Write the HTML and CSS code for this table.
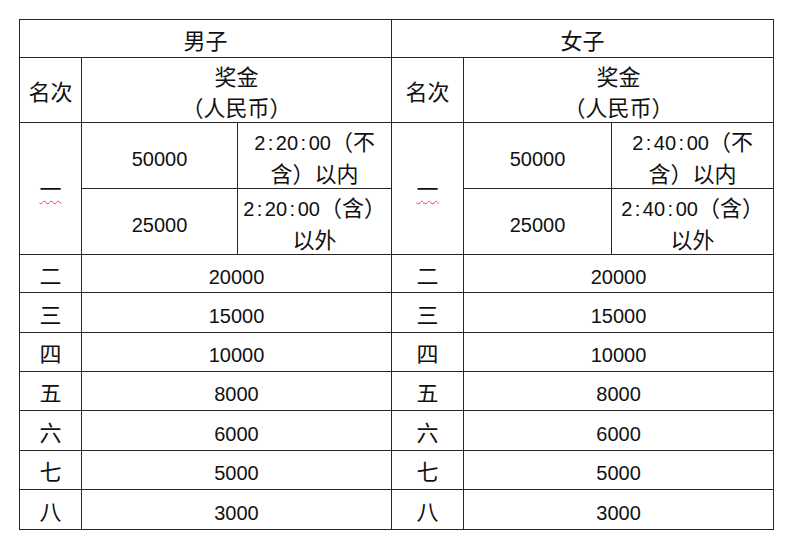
FILE: index.html
```html
<!DOCTYPE html>
<html lang="zh">
<head>
<meta charset="utf-8">
<link rel="stylesheet" href="styles.css">
</head>
<body>
<table class="prize">
  <colgroup>
    <col class="c-rank-m"><col class="c-a-m"><col class="c-b-m">
    <col class="c-rank-f"><col class="c-a-f"><col class="c-b-f">
  </colgroup>
  <tr class="r-head">
    <td colspan="3">男子</td>
    <td colspan="3">女子</td>
  </tr>
  <tr class="r-sub">
    <td>名次</td>
    <td colspan="2" class="two"><div class="lines sub">奖金<br>（人民币）</div></td>
    <td>名次</td>
    <td colspan="2" class="two"><div class="lines sub">奖金<br>（人民币）</div></td>
  </tr>
  <tr class="r-first">
    <td rowspan="2" class="first"><span class="squiggle">一</span></td>
    <td class="num">50000</td>
    <td class="two"><div class="lines"><span class="num">2<span class="colon">:</span>20<span class="colon">:</span>00</span>（不<br>含）以内</div></td>
    <td rowspan="2" class="first"><span class="squiggle">一</span></td>
    <td class="num">50000</td>
    <td class="two"><div class="lines"><span class="num">2<span class="colon">:</span>40<span class="colon">:</span>00</span>（不<br>含）以内</div></td>
  </tr>
  <tr class="r-first">
    <td class="num">25000</td>
    <td class="two"><div class="lines"><span class="num">2<span class="colon">:</span>20<span class="colon">:</span>00</span>（含）<br>以外</div></td>
    <td class="num">25000</td>
    <td class="two"><div class="lines"><span class="num">2<span class="colon">:</span>40<span class="colon">:</span>00</span>（含）<br>以外</div></td>
  </tr>
  <tr class="r-38"><td>二</td><td colspan="2" class="num">20000</td><td>二</td><td colspan="2" class="num">20000</td></tr>
  <tr class="r-40"><td>三</td><td colspan="2" class="num">15000</td><td>三</td><td colspan="2" class="num">15000</td></tr>
  <tr class="r-39"><td>四</td><td colspan="2" class="num">10000</td><td>四</td><td colspan="2" class="num">10000</td></tr>
  <tr class="r-39"><td>五</td><td colspan="2" class="num">8000</td><td>五</td><td colspan="2" class="num">8000</td></tr>
  <tr class="r-40"><td>六</td><td colspan="2" class="num">6000</td><td>六</td><td colspan="2" class="num">6000</td></tr>
  <tr class="r-39"><td>七</td><td colspan="2" class="num">5000</td><td>七</td><td colspan="2" class="num">5000</td></tr>
  <tr class="r-40"><td>八</td><td colspan="2" class="num">3000</td><td>八</td><td colspan="2" class="num">3000</td></tr>
</table>
</body>
</html>
```

FILE: styles.css
```css
html, body {
  margin: 0;
  padding: 0;
  background: #ffffff;
}
body {
  padding: 19px 0 0 19px;
  font-family: "Liberation Sans", "Noto Sans CJK SC", sans-serif;
  font-size: 22px;
  color: #111111;
}
.prize {
  border-collapse: collapse;
  table-layout: fixed;
  width: 755px;
}
.prize td {
  border: 1px solid #262626;
  text-align: center;
  vertical-align: middle;
  padding: 6px 0 0 0;
  line-height: 26px;
  white-space: nowrap;
}
.prize td.num { font-size: 20px; padding-top: 6px; }
.num { font-size: 20px; }

.c-rank-m { width: 62px; }
.c-a-m { width: 156px; }
.c-b-m { width: 154px; }
.c-rank-f { width: 72px; }
.c-a-f { width: 148px; }
.c-b-f { width: 162px; }

.r-head { height: 38px; }
.r-sub { height: 65px; }
.r-first { height: 66px; }
.r-38 { height: 38px; }
.r-39 { height: 39px; }
.r-40 { height: 40px; }

.prize td.two { padding: 0; }
.lines {
  line-height: 32px;
  margin: 3px 0 -3px 0;
}
.lines.sub {
  line-height: 31px;
  margin: 3px 0 -3px 0;
}
.prize td.first { padding-top: 3px; }

.colon {
  display: inline-block;
  padding: 0 2.5px;
}
.squiggle {
  text-decoration: underline wavy #e64545;
  text-decoration-thickness: 1px;
  text-underline-offset: 3px;
}
```
